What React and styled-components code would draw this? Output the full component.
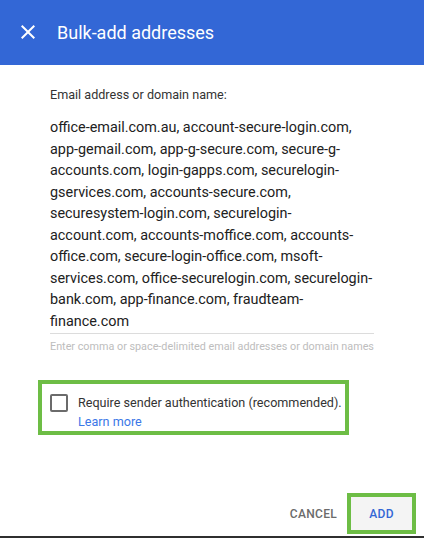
import React from "react";
import styled, { createGlobalStyle } from "styled-components";

const Global = createGlobalStyle`
  html, body { margin: 0; padding: 0; background: #2f2f2f; }
  body { font-family: Roboto, "Liberation Sans", Arial, sans-serif; }
  * { box-sizing: border-box; }
`;

const Dialog = styled.div`
  width: 424px;
  height: 536px;
  background: #fff;
  display: flex;
  flex-direction: column;
`;

const Header = styled.header`
  height: 65px;
  background: #3367d6;
  display: flex;
  align-items: center;
  padding-left: 16px;
  gap: 17px;
  flex-shrink: 0;
`;

const IconButton = styled.button`
  width: 24px;
  height: 24px;
  padding: 0;
  border: 0;
  background: none;
  display: flex;
  align-items: center;
  justify-content: center;
  margin-top: -1px;
`;

const Title = styled.h1`
  margin: 0;
  font-size: 18px;
  font-weight: 400;
  color: #fff;
`;

const Body = styled.div`
  flex: 1;
  padding: 22px 50px 0 50px;
  display: flex;
  flex-direction: column;
`;

const Label = styled.div`
  font-size: 12.6px;
  line-height: 16px;
  color: #333;
`;

const Field = styled.div`
  margin-top: 14px;
  font-size: 14.4px;
  line-height: 21.5px;
  color: #212121;
  border-bottom: 1px solid #dcdcdc;
  padding-bottom: 1px;
  width: 324px;
`;

const Hint = styled.div`
  margin-top: 6px;
  font-size: 10.8px;
  line-height: 14px;
  color: #bdbdbd;
  white-space: nowrap;
`;

const Highlight = styled.div`
  border: 4.5px solid #6dbd45;
  margin-top: 26px;
  margin-left: -12px;
  width: 311px;
  padding: 10px 0 0 8px;
  display: flex;
  gap: 10px;
`;

const Box = styled.span`
  width: 18px;
  height: 18px;
  border: 2px solid #6b6b6b;
  border-radius: 2px;
  flex-shrink: 0;
`;

const CheckText = styled.div`
  font-size: 12.6px;
  line-height: 18.5px;
  color: #333;
  white-space: nowrap;
`;

const Link = styled.a`
  display: block;
  color: #3b78e7;
  text-decoration: none;
`;

const Footer = styled.div`
  display: flex;
  justify-content: flex-end;
  align-items: center;
  padding: 0 8px 2px 0;
  gap: 10px;
`;

const Button = styled.button`
  font-family: Roboto, "Liberation Sans", Arial, sans-serif;
  font-size: 12px;
  font-weight: 500;
  letter-spacing: 0.3px;
  border: ${(p) => (p.$highlight ? "4.5px solid #6dbd45" : "0")};
  background: ${(p) => (p.$highlight ? "#f4f4f4" : "transparent")};
  color: ${(p) => (p.$primary ? "#3367d6" : "#6b6b6b")};
  padding: 0;
  width: ${(p) => (p.$highlight ? "69px" : "auto")};
  height: 41px;
`;

const CloseIcon = () => (
  <svg width="24" height="24" viewBox="0 0 24 24">
    <path
      d="M19 6.41 17.59 5 12 10.59 6.41 5 5 6.41 10.59 12 5 17.59 6.41 19 12 13.41 17.59 19 19 17.59 13.41 12z"
      fill="#fff"
    />
  </svg>
);

const domains =
  "office-email.com.au, account-secure-login.com, app-gemail.com, app-g-secure.com, secure-g-accounts.com, login-gapps.com, securelogin-gservices.com, accounts-secure.com, securesystem-login.com, securelogin-account.com, accounts-moffice.com, accounts-office.com, secure-login-office.com, msoft-services.com, office-securelogin.com, securelogin-bank.com, app-finance.com, fraudteam-finance.com";

export default function App() {
  return (
    <>
      <Global />
      <Dialog>
        <Header>
          <IconButton aria-label="Close">
            <CloseIcon />
          </IconButton>
          <Title>Bulk-add addresses</Title>
        </Header>
        <Body>
          <Label>Email address or domain name:</Label>
          <Field>{domains}</Field>
          <Hint>Enter comma or space-delimited email addresses or domain names</Hint>
          <Highlight>
            <Box />
            <CheckText>
              Require sender authentication (recommended).
              <Link href="#">Learn more</Link>
            </CheckText>
          </Highlight>
        </Body>
        <Footer>
          <Button>CANCEL</Button>
          <Button $primary $highlight>ADD</Button>
        </Footer>
      </Dialog>
    </>
  );
}
